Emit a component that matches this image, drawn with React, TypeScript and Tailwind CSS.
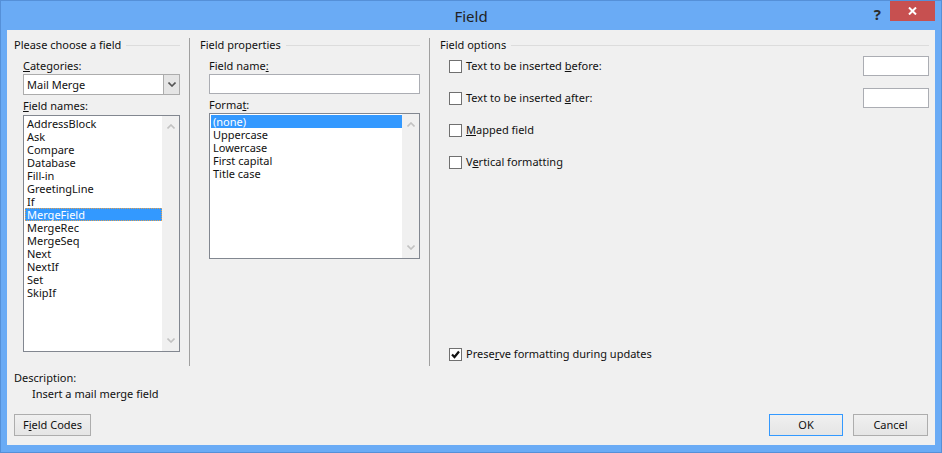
import type { ReactNode } from 'react';

const fieldNames = [
  'AddressBlock',
  'Ask',
  'Compare',
  'Database',
  'Fill-in',
  'GreetingLine',
  'If',
  'MergeField',
  'MergeRec',
  'MergeSeq',
  'Next',
  'NextIf',
  'Set',
  'SkipIf',
];

const formats = ['(none)', 'Uppercase', 'Lowercase', 'First capital', 'Title case'];

function GroupHeader({ title }: { title: string }) {
  return (
    <div className="flex items-center gap-[5px] h-[15px]">
      <span className="whitespace-nowrap">{title}</span>
      <div className="flex-1 h-px bg-[#dcdcdc] mt-[-1px]" />
    </div>
  );
}

function Chevron({ up, color = '#c2c2c2' }: { up?: boolean; color?: string }) {
  return (
    <svg width="8" height="5" viewBox="0 0 8 5" className="block">
      <polyline
        points={up ? '0.5,4.5 4,1 7.5,4.5' : '0.5,0.5 4,4 7.5,0.5'}
        fill="none"
        stroke={color}
        strokeWidth="1.6"
      />
    </svg>
  );
}

// plain listbox with a disabled vertical scrollbar
function ListBox({
  items,
  selected,
  height,
  focused,
}: {
  items: string[];
  selected: string;
  height: string;
  focused?: boolean;
}) {
  return (
    <div className={`flex border border-[#828790] bg-white ${height}`}>
      <div className="flex-1 pl-px pt-px">
        {items.map((item) =>
          item === selected ? (
            <div
              key={item}
              className={`h-[13px] leading-[11px] pl-px bg-[#3399ff] text-white border border-dotted ${
                focused ? 'border-[#e0a050]' : 'border-[#3399ff]'
              }`}
            >
              {item}
            </div>
          ) : (
            <div key={item} className="h-[13px] leading-[13px] pl-[2px]">
              {item}
            </div>
          ),
        )}
      </div>
      <div className="w-[17px] bg-[#f0f0f0] flex flex-col items-center justify-between py-[8px]">
        <Chevron up />
        <Chevron />
      </div>
    </div>
  );
}

function CheckBox({ checked, children, input }: { checked?: boolean; children: ReactNode; input?: boolean }) {
  return (
    <div className="flex items-center h-[20px] pl-[9px]">
      <div className="w-[13px] h-[13px] border border-[#707070] bg-white flex items-center justify-center">
        {checked && (
          <svg width="9" height="9" viewBox="0 0 9 9">
            <path d="M1 4.5 L3.5 7 L8 1.5" fill="none" stroke="#111" strokeWidth="2.2" />
          </svg>
        )}
      </div>
      <span className="ml-[4px]">{children}</span>
      {input && <div className="ml-auto w-[66px] h-[20px] border border-[#abadb3] bg-white" />}
    </div>
  );
}

function Button({ children, focused, width }: { children: ReactNode; focused?: boolean; width: string }) {
  return (
    <div
      className={`${width} h-[22px] flex items-center justify-center border bg-linear-to-b from-[#f0f0f0] to-[#e5e5e5] ${
        focused ? 'border-[#3399ff]' : 'border-[#adadad]'
      }`}
    >
      {children}
    </div>
  );
}

export default function App() {
  return (
    <div className="w-[942px] h-[453px] bg-[#6aabf5] border border-[#5590d8] flex flex-col font-['Noto_Sans',sans-serif] text-[11px] text-[#111]">
      {/* Title bar */}
      <div className="relative h-[29px] flex items-center justify-center">
        <span className="text-[15px] text-[#222] mt-[1px]">Field</span>
        <span className="absolute right-[60px] top-[2px] text-[15px] font-bold text-[#2b2b2b]">?</span>
        <div className="absolute right-[6px] top-0 w-[45px] h-[20px] bg-[#c75050] flex items-center justify-center">
          <svg width="9" height="8" viewBox="0 0 9 8">
            <path d="M1 0.5 L8 7.5 M8 0.5 L1 7.5" stroke="#fff" strokeWidth="2" />
          </svg>
        </div>
      </div>

      {/* Dialog body */}
      <div className="mx-[6px] h-[415px] bg-[#f0f0f0] flex flex-col pl-[7px] pr-[6px] pt-[8px]">
        <div className="flex h-[328px]">
          {/* Choose a field */}
          <div className="w-[166px] flex flex-col">
            <GroupHeader title="Please choose a field" />
            <div className="pl-[9px] flex flex-col">
              <div className="mt-[5px] h-[15px] leading-[15px]">
                <u>C</u>ategories:
              </div>
              <div className="mt-px h-[21px] flex border border-[#acacac] bg-white">
                <span className="flex-1 pl-[3px] leading-[19px]">Mail Merge</span>
                <div className="w-[16px] bg-[#e5e5e5] border-l border-[#acacac] flex items-center justify-center">
                  <Chevron color="#555" />
                </div>
              </div>
              <div className="mt-[3px] h-[15px] leading-[15px]">
                <u>F</u>ield names:
              </div>
              <div className="mt-[2px]">
                <ListBox items={fieldNames} selected="MergeField" height="h-[237px]" focused />
              </div>
            </div>
          </div>

          <div className="ml-[9px] w-px bg-[#a0a0a0]" />

          {/* Field properties */}
          <div className="ml-[10px] w-[220px] flex flex-col">
            <GroupHeader title="Field properties" />
            <div className="pl-[9px] flex flex-col">
              <div className="mt-[5px] h-[15px] leading-[15px]">
                Field name<u>:</u>
              </div>
              <div className="mt-px h-[20px] border border-[#abadb3] bg-white" />
              <div className="mt-[3px] h-[15px] leading-[15px]">
                Forma<u>t</u>:
              </div>
              <div className="mt-px">
                <ListBox items={formats} selected="(none)" height="h-[146px]" />
              </div>
            </div>
          </div>

          <div className="ml-[9px] w-px bg-[#a0a0a0]" />

          {/* Field options */}
          <div className="ml-[10px] flex-1 flex flex-col">
            <GroupHeader title="Field options" />
            <div className="mt-[3px] flex flex-col gap-[12px]">
              <CheckBox input>
                Text to be inserted <u>b</u>efore:
              </CheckBox>
              <CheckBox input>
                Text to be inserted <u>a</u>fter:
              </CheckBox>
              <CheckBox>
                <u>M</u>apped field
              </CheckBox>
              <CheckBox>
                V<u>e</u>rtical formatting
              </CheckBox>
            </div>
            <div className="mt-auto mb-[2px]">
              <CheckBox checked>
                Prese<u>r</u>ve formatting during updates
              </CheckBox>
            </div>
          </div>
        </div>

        {/* Description */}
        <div className="mt-[4px] h-[15px] leading-[15px]">Description:</div>
        <div className="h-[15px] leading-[15px] pl-[18px] mt-px">Insert a mail merge field</div>

        {/* Buttons */}
        <div className="mt-[13px] flex items-center">
          <Button width="w-[77px]">
            F<u>i</u>eld Codes
          </Button>
          <div className="ml-auto flex gap-[10px] mr-px">
            <Button width="w-[74px]" focused>
              OK
            </Button>
            <Button width="w-[75px]">Cancel</Button>
          </div>
        </div>
      </div>
    </div>
  );
}
